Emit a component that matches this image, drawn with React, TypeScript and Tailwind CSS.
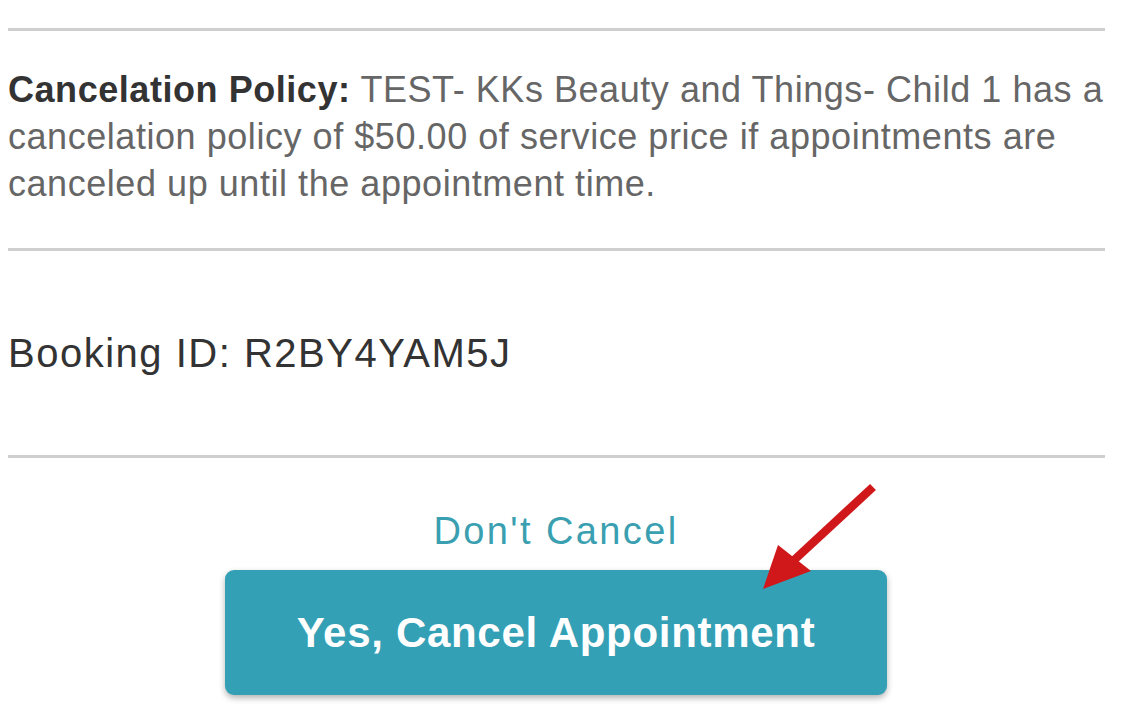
import React from 'react';

const font = { fontFamily: '"Liberation Sans", Arial, Helvetica, sans-serif' };

// Red annotation arrow drawn over the button
const Arrow = () => (
  <svg
    className="absolute left-[750px] top-[480px] pointer-events-none"
    width="135"
    height="120"
    viewBox="0 0 135 120"
  >
    <line x1="123" y1="7" x2="42" y2="82" stroke="#d0181b" strokeWidth="8.5" />
    <polygon points="13,109 28,65 61,91" fill="#d0181b" />
  </svg>
);

export default function App() {
  return (
    <div className="relative w-[1129px] h-[717px] bg-white overflow-hidden" style={font}>
      <div className="w-[1097px] ml-2">
        <div className="h-[28px]" />
        <div className="border-t-[3px] border-[#cfcfcf]" />
        <p className="pt-[35px] pb-[41px] text-[36px] leading-[47px] text-[#666] tracking-[0.55px] whitespace-nowrap">
          <span className="font-bold text-[#333]">Cancelation Policy:</span> TEST- KKs Beauty and
          Things- Child 1 has a<br />
          cancelation policy of $50.00 of service price if appointments are
          <br />
          canceled up until the appointment time.
        </p>
        <div className="border-t-[3px] border-[#cfcfcf]" />
        <div className="h-[204px] flex items-center">
          <span className="text-[40px] text-[#333] tracking-[1.5px]">Booking ID: R2BY4YAM5J</span>
        </div>
        <div className="border-t-[3px] border-[#cfcfcf]" />
      </div>
      <div className="flex flex-col items-center w-[1112px] pt-[48px]">
        <button className="text-[38px] text-[#3a9fb0] leading-[50px] tracking-[2.4px]">Don't Cancel</button>
        <button className="mt-[14px] w-[662px] h-[125px] rounded-[9px] bg-[#34a0b6] text-white font-bold text-[42px] tracking-[0.7px] shadow-[0_3px_6px_rgba(0,0,0,0.3)]">
          Yes, Cancel Appointment
        </button>
      </div>
      <Arrow />
    </div>
  );
}
